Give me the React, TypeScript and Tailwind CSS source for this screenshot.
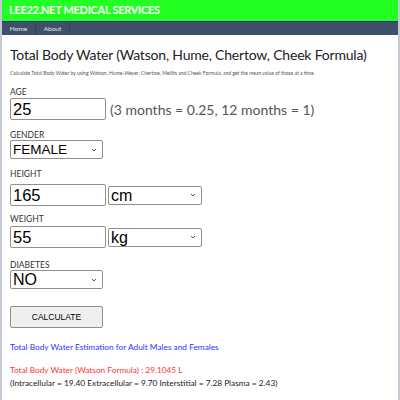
import React from "react";

const ui = { fontFamily: 'Lato, "Noto Sans", sans-serif' };
const arial = { fontFamily: '"Liberation Sans", Arial, sans-serif' };

function Label({ children }: { children: React.ReactNode }) {
  return (
    <div className="text-[8.5px] leading-[12px] text-[#333] uppercase" style={ui}>
      {children}
    </div>
  );
}

function Chevron() {
  return (
    <svg width="6" height="4" viewBox="0 0 6 4" className="shrink-0">
      <path d="M1 1 L3 3 L5 1" fill="none" stroke="#555" strokeWidth="1" />
    </svg>
  );
}

function SelectBox({ value, width, text = "text-[16px]" }: { value: string; width: string; text?: string }) {
  return (
    <div
      className={`${width} h-[19px] border border-[#8f8f8f] rounded-[2px] bg-white flex items-center justify-between pl-[2px] pr-[5px] ${text} text-black`}
      style={arial}
    >
      <span className="leading-[17px]">{value}</span>
      <Chevron />
    </div>
  );
}

function TextBox({ value }: { value: string }) {
  return (
    <div
      className="w-[96px] h-[22px] shrink-0 border border-[#8f8f8f] rounded-[2px] bg-white flex items-center px-[2px] text-[16.5px] text-black"
      style={arial}
    >
      {value}
    </div>
  );
}

export default function App() {
  return (
    <div className="w-[400px] h-[400px] overflow-hidden bg-white flex flex-col border-l-2 border-r-2 border-[#c5c9d6]">
      <div className="h-[21px] shrink-0 bg-[#22ff22] flex items-center pl-[7px]">
        <span className="text-white font-bold text-[11px] tracking-[-0.3px] whitespace-nowrap" style={ui}>
          LEE22.NET MEDICAL SERVICES
        </span>
      </div>
      <div className="h-[1px] shrink-0 bg-[#2b2f8a]" />
      <div className="h-[13px] shrink-0 bg-[#3f5168] flex items-stretch text-[6.5px] text-[#e6e9ee]" style={ui}>
        <div className="w-[34px] flex items-center justify-center border-r border-[#33435a]">Home</div>
        <div className="w-[34px] flex items-center justify-center border-r border-[#33435a]">About</div>
      </div>
      <div className="pl-[8px] pt-[10px] flex flex-col">
        <div className="text-[14px] leading-[20px] tracking-[-0.2px] text-[#222] whitespace-nowrap" style={ui}>
          Total Body Water (Watson, Hume, Chertow, Cheek Formula)
        </div>
        <div className="text-[5px] leading-[8px] text-[#555] mt-[4px] whitespace-nowrap" style={ui}>
          Calculate Total Body Water by using Watson, Hume-Weyer, Chertow, Mellits and Cheek Formula, and get the mean value of those at a time.
        </div>

        <div className="mt-[9px]">
          <Label>Age</Label>
          <div className="flex items-center gap-[4px]">
            <TextBox value="25" />
            <span className="text-[14px] text-[#555] whitespace-nowrap" style={ui}>
              (3 months = 0.25, 12 months = 1)
            </span>
          </div>
        </div>

        <div className="mt-[9px]">
          <Label>Gender</Label>
          <div className="-mt-[1px]">
            <SelectBox value="FEMALE" width="w-[93px]" text="text-[13.5px]" />
          </div>
        </div>

        <div className="mt-[9px]">
          <Label>Height</Label>
          <div className="flex items-center gap-[2px] mt-[4px]">
            <TextBox value="165" />
            <SelectBox value="cm" width="w-[94px]" />
          </div>
        </div>

        <div className="mt-[7px]">
          <Label>Weight</Label>
          <div className="flex items-center gap-[2px] mt-[1px]">
            <TextBox value="55" />
            <SelectBox value="kg" width="w-[94px]" />
          </div>
        </div>

        <div className="mt-[11px]">
          <Label>Diabetes</Label>
          <div className="-mt-[1px]">
            <SelectBox value="NO" width="w-[93px]" />
          </div>
        </div>

        <div
          className="mt-[17px] w-[93px] h-[22px] bg-[#efefef] border border-[#8f8f8f] rounded-[2px] flex items-center justify-center text-[8.5px] text-black"
          style={arial}
        >
          CALCULATE
        </div>

        <div className="mt-[13px] text-[8.3px] leading-[12px] text-[#3333ff] whitespace-nowrap" style={ui}>
          Total Body Water Estimation for Adult Males and Females
        </div>
        <div className="mt-[11px] text-[8.3px] leading-[12px] text-[#ff3333] whitespace-nowrap" style={ui}>
          Total Body Water (Watson Formula) : 29.1045 L
        </div>
        <div className="mt-[1px] text-[8.3px] leading-[12px] text-[#222] whitespace-nowrap" style={ui}>
          (Intracellular = 19.40 Extracellular = 9.70 Interstitial = 7.28 Plasma = 2.43)
        </div>
      </div>
    </div>
  );
}
